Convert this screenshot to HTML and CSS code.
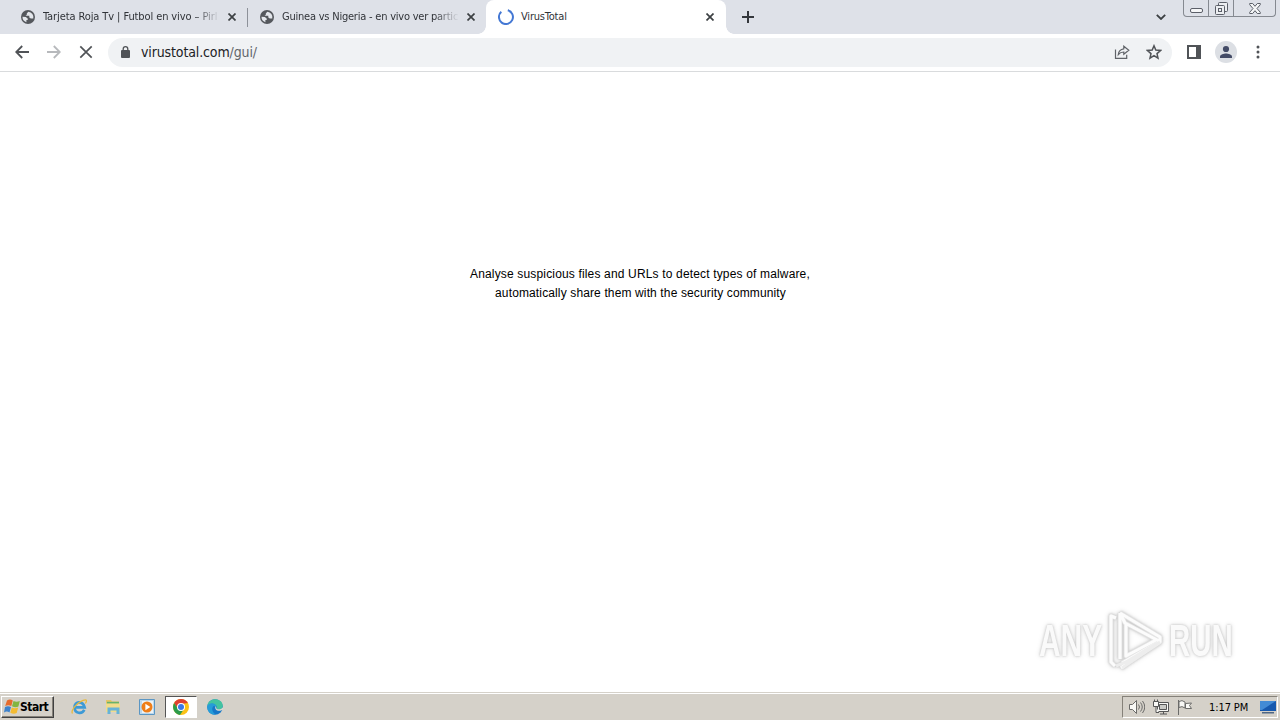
FILE: index.html
```
<!DOCTYPE html>
<html lang="en">
<head>
  <meta charset="UTF-8">
  <title>VirusTotal</title>
  <link rel="stylesheet" href="styles.css">
</head>
<body>

  <svg class="defs">
    <symbol id="globe" viewBox="0 0 14 14">
      <circle cx="7" cy="7" r="7" fill="#55585d"/>
      <path d="M7.3 1.7 5.8 3.4v1.4L4.5 5.8h3.8v1.7l1.5 1.1h2.5A5.6 5.6 0 0 0 7.3 1.7zM1.5 6.8l3.3.1 1.9 1.7v1.3H5.4v2.3A5.5 5.5 0 0 1 1.5 6.8z" fill="#e4e7ec"/>
    </symbol>
    <symbol id="cross" viewBox="0 0 8 8">
      <path d="M.5.5l7 7M7.5.5l-7 7" stroke="#3c4043" stroke-width="1.7"/>
    </symbol>
  </svg>

  <div class="tabstrip">
    <div class="tab">
      <svg class="favicon"><use href="#globe"/></svg>
      <span class="title fade">Tarjeta Roja Tv | Futbol en vivo – Pirl</span>
      <svg class="close"><use href="#cross"/></svg>
    </div>
    <div class="tab second">
      <svg class="favicon"><use href="#globe"/></svg>
      <span class="title fade guinea">Guinea vs Nigeria - en vivo ver partic</span>
      <svg class="close"><use href="#cross"/></svg>
    </div>
    <div class="tab active">
      <svg class="spinner" viewBox="0 0 16 16"><path d="M9.8 1.3A7 7 0 1 1 3.3 2.8" fill="none" stroke="#4478d4" stroke-width="2"/></svg>
      <span class="title virus">VirusTotal</span>
      <svg class="close"><use href="#cross"/></svg>
    </div>
    <svg class="plus" viewBox="0 0 12 12"><path d="M6 0v12M0 6h12" stroke="#34373c" stroke-width="2"/></svg>
    <svg class="chevron" viewBox="0 0 10 6"><path d="M.8.8 5 5 9.2.8" fill="none" stroke="#3c4043" stroke-width="1.8"/></svg>
    <div class="window-buttons">
      <span><svg width="13" height="5"><rect x=".5" y=".5" width="12" height="4" rx="1.5" fill="#f5f6f7" stroke="#5b5f68"/></svg></span>
      <span><svg width="13" height="13" fill="#eceef1" stroke="#5b5f68"><rect x="3.5" y=".5" width="9" height="9" rx="1"/><rect x=".5" y="3.5" width="9" height="9" rx="1"/><rect x="3.5" y="6.5" width="3" height="3"/></svg></span>
      <span><svg width="12" height="11"><path d="M.7.5h3L6 3.3 8.3.5h3v1.2L8 5.5l3.3 3.8v1.2h-3L6 7.7l-2.3 2.8h-3V9.3L4 5.5.7 1.7z" fill="#f5f6f7" stroke="#5b5f68"/></svg></span>
    </div>
  </div>

  <div class="toolbar">
    <svg class="nav" viewBox="0 0 14 14"><path d="M14 7H1.5M7.2 1 1.2 7l6 6" fill="none" stroke="#505357" stroke-width="1.8"/></svg>
    <svg class="nav" viewBox="0 0 14 14"><path d="M0 7h12.5M6.8 1l6 6-6 6" fill="none" stroke="#b7b9bc" stroke-width="1.8"/></svg>
    <svg class="nav" viewBox="0 0 14 14"><path d="M1.3 1.3l11.4 11.4M12.7 1.3 1.3 12.7" stroke="#505357" stroke-width="1.7"/></svg>
    <div class="omnibox">
      <svg class="lock" viewBox="0 0 9 12"><rect y="4" width="9" height="8" rx="1" fill="#505357"/><path d="M2.2 4.5V3a2.3 2.3 0 0 1 4.6 0v1.5" fill="none" stroke="#505357" stroke-width="1.3"/></svg>
      <span class="url">virustotal.com<i>/gui/</i></span>
      <svg class="share" viewBox="0 0 16 14"><path d="M1.5 4.5v8.8h11.2V9.8M4.3 9.5C4.6 6.4 6.5 4.2 9.8 3.8V1.2L14.8 5.3l-5 4V7C7.3 7 5.7 7.8 4.3 9.5z" fill="none" stroke="#606368" stroke-width="1.2"/></svg>
      <svg class="star" viewBox="0 0 16 16"><path d="M8 1.8l1.8 4.3 4.7.4L11 9.6l1 4.6-4-2.5-4 2.5 1-4.6-3.5-3.1 4.7-.4z" fill="none" stroke="#505357" stroke-width="1.5"/></svg>
    </div>
    <svg class="panel" viewBox="0 0 14 14"><path d="M1 1h12v12H1z" fill="#fff" stroke="#505357" stroke-width="2"/><path d="M9 1h4v12H9z" fill="#505357"/></svg>
    <svg class="avatar" viewBox="0 0 22 22"><circle cx="11" cy="11" r="11" fill="#dcdfe4"/><circle cx="11" cy="8" r="3.1" fill="#434b66"/><path d="M5 17v-1.5c0-2.2 4-3.1 6-3.1s6 .9 6 3.1V17z" fill="#434b66"/></svg>
    <svg class="menu" viewBox="0 0 4 14" fill="#505357"><circle cx="2" cy="2" r="1.5"/><circle cx="2" cy="7" r="1.5"/><circle cx="2" cy="12" r="1.5"/></svg>
  </div>

  <div class="page">
    <p class="line-one">Analyse suspicious files and URLs to detect types of malware,</p>
    <p class="line-two">automatically share them with the security community</p>
    <div class="watermark">
      <span>ANY</span>
      <svg viewBox="0 0 56 62">
        <path d="M8 8 3 6v46l4 4M12 3v46M12 3l40 24v5L18 54l-5 4M12 3l5 10 34 18M18 13v33l30-16M14 53l35-20" fill="none" stroke="#e4e4e4" stroke-width="4.5" stroke-linejoin="round"/>
        <path d="M8 8 3 6v46l4 4M12 3v46M12 3l40 24v5L18 54l-5 4M12 3l5 10 34 18M18 13v33l30-16M14 53l35-20" fill="none" stroke="#fcfcfc" stroke-width="3" stroke-linejoin="round"/>
        <path d="M14 58l38-26M8 56l10-4 31-19" fill="none" stroke="#ededed" stroke-width="3"/>
      </svg>
      <span class="run">RUN</span>
    </div>
  </div>

  <div class="taskbar">
    <div class="start">
      <svg viewBox="0 0 16 16"><path d="M3 1.5q3-2 5.8 0L7.3 7Q4.3 5.5 1.2 7z" fill="#e66b2c"/><path d="M9.5 2q3 1.5 6.3 0L14.4 7.6q-3 1.4-6.4-.3z" fill="#82b541"/><path d="M1 8q3-1.6 6 0l-1.5 5.4q-2.7-1.7-5.5 0z" fill="#3d82cc"/><path d="M7.8 8.4q3 1.5 6.4 0l-1.5 5.7q-3 1.4-6.4-.3z" fill="#f3bb32"/></svg>
      <b>Start</b>
    </div>
    <div class="launch">
      <svg viewBox="0 0 16 16"><path d="M13.6 8.4H3.6c-.2-6.3 8.2-6.9 10 0zM3.6 8.5c0 6.1 7.4 7 9.7 2.4" fill="none" stroke="#3d9ad6" stroke-width="2.7"/><path d="M1.5 14.5C-.8 11 8 1.5 14.5.8c1.5.1 1 2-.2 3.7" fill="none" stroke="#e8b93c" stroke-width="1.3"/></svg>
    </div>
    <div class="launch">
      <svg viewBox="0 0 16 16"><path d="M1 1h5l1 1.5h7V12H1z" fill="#e4c667"/><path d="M2 2.8h12v2H2z" fill="#67b36b"/><path d="M1 4.5h14V13H1z" fill="#f1dc8c"/><path d="M2.5 15V8.5h12V15h-3v-3.5h-6V15z" fill="#67b3d7"/></svg>
    </div>
    <div class="launch">
      <svg viewBox="0 0 16 16"><path d="M.5.5h15v15H.5z" fill="#bcd8ed" stroke="#5b96c3"/><path d="M3 2h11v12H3z" fill="#edf3f6"/><circle cx="8" cy="8" r="5.5" fill="#ef7e19"/><path d="M6.4 4.8 11.3 8l-4.9 3.2z" fill="#fff"/></svg>
    </div>
    <div class="launch pressed">
      <svg viewBox="0 0 16 16"><circle cx="8" cy="8" r="8" fill="#fbc116"/><path d="M1.1 4A8 8 0 0 1 14.9 4L8 5 5 9.8z" fill="#df4032"/><path d="M1.1 4A8 8 0 0 0 7 15.9l3.5-5.2L5 9.8z" fill="#2b9b4b"/><circle cx="8" cy="8" r="4" fill="#fff"/><circle cx="8" cy="8" r="3" fill="#3b78e7"/></svg>
    </div>
    <div class="launch">
      <svg viewBox="0 0 16 16"><circle cx="8" cy="8" r="7.8" fill="#1677c8"/><path d="M.5 7C1-2 15.5-1.7 15.8 7c0 4-5 4-6.2 2.7C11 6 5 2 .5 7z" fill="#43c3a0"/><path d="M.3 7.5C1.5 3 8.8 3.5 9.8 7.8L6.5 7C3.7 10 6 14 9 15.6 3 16 0 12 .3 7.5z" fill="#269cd8"/><path d="M8.8 7c-2.2 3 2 6.3 5.8 4.2l1.4-.4V8.3c-1.2 2-4.8 2.6-6.4 1.4z" fill="#ddd9d0"/></svg>
    </div>
    <div class="tray">
      <svg viewBox="0 0 16 16" fill="#f8f8f5" stroke="#6b6b69"><path d="M.5 5.5h3l4-4v13l-4-4h-3z"/><path d="M9.5 5.5q2 2.5 0 5M11.5 3.5q3.5 4.5 0 9M13.5 2q4.5 6 0 12" fill="none"/></svg>
      <svg viewBox="0 0 16 16" fill="#f8f8f5" stroke="#555"><path d="M4.5 3.5h11v9h-11zM7 15h7M10.5 12.5V15"/><path d="M6.5 5.5h7v5h-7z" fill="#c9c9c5"/><path d="M.5 2.5h5v5h-5zM1.5.5v2M4.5.5v2M3 7.5v6h3"/></svg>
      <svg viewBox="0 0 16 16" fill="#f8f8f5" stroke="#6b6b69"><path d="M1.5 1v15M2 2.5q3-2 6 .5v6q-3-2.5-6-.5zM8.5 4.5l6-.5-2 2.5 2 3H8.5z"/></svg>
      <span class="clock">1:17 PM</span>
      <svg class="desktop" viewBox="0 0 16 14"><path d="M0 1h16v10H0z" fill="#1759ae"/><path d="M0 1h16L2 10H0z" fill="#438bd5"/><path d="M2 12h12v1.5H2z" fill="#4e6684"/></svg>
    </div>
  </div>

</body>
</html>
```

FILE: styles.css
```
* {
  box-sizing: border-box;
}

body {
  margin: 0;
  width: 1280px;
  height: 720px;
  display: flex;
  flex-direction: column;
  background: #fff;
  font-family: 'DejaVu Sans Condensed', 'DejaVu Sans', sans-serif;
  overflow: hidden;
}

svg {
  display: block;
  flex: none;
}

.defs {
  position: absolute;
  width: 0;
  height: 0;
}

.tabstrip {
  display: flex;
  align-items: flex-start;
  height: 34px;
  background: #dee1e8;
}

.tab {
  display: flex;
  align-items: center;
  width: 248px;
  height: 34px;
  padding: 0 11px 0 21px;
  border-right: 1px solid transparent;
  border-image: linear-gradient(transparent 25%, #8d9199 25%, #8d9199 79%, transparent 79%) 1;
}

.tab.second {
  width: 238px;
  padding: 0 11px 0 12px;
  border: 0;
}

.tab.active {
  position: relative;
  width: 240px;
  padding: 0 12px;
  border: 0;
  border-radius: 8px 8px 0 0;
  background: #fff;
}

.tab.active::before,
.tab.active::after {
  content: '';
  position: absolute;
  bottom: 0;
  width: 8px;
  height: 8px;
}

.tab.active::before {
  left: -8px;
  background: radial-gradient(circle at 0 0, transparent 7.5px, #fff 8px);
}

.tab.active::after {
  right: -8px;
  background: radial-gradient(circle at 100% 0, transparent 7.5px, #fff 8px);
}

.favicon {
  width: 14px;
  height: 14px;
}

.spinner {
  width: 16px;
  height: 16px;
}

.title {
  width: 177px;
  margin-left: 8px;
  white-space: nowrap;
  color: #303338;
  font-size: 11px;
  letter-spacing: -0.1px;
  line-height: 16px;
}

.fade {
  -webkit-mask-image: linear-gradient(to right, #000 86%, transparent);
  mask-image: linear-gradient(to right, #000 86%, transparent);
}

.guinea {
  letter-spacing: -0.22px;
}

.virus {
  margin-left: 7px;
  letter-spacing: -0.2px;
}

.close {
  width: 8px;
  height: 8px;
  margin-left: auto;
}

.plus {
  width: 12px;
  height: 12px;
  margin: 11px 0 0 16px;
}

.chevron {
  width: 10px;
  height: 6px;
  margin: 14px 17px 0 auto;
}

.window-buttons {
  display: flex;
  width: 93px;
  height: 17px;
  margin-right: 4px;
  border: 1px solid #858990;
  border-top: 0;
  border-radius: 0 0 4px 4px;
}

.window-buttons span {
  display: flex;
  align-items: center;
  justify-content: center;
  width: 25px;
  border-right: 1px solid #858990;
}

.window-buttons span:first-child {
  align-items: flex-end;
  padding-bottom: 3px;
}

.window-buttons span:last-child {
  flex: 1;
  border: 0;
}

.toolbar {
  display: flex;
  align-items: center;
  height: 38px;
  padding: 0 20px 1px 15px;
  border-bottom: 1px solid #d9dbdd;
}

.nav {
  width: 14px;
  height: 14px;
  margin-right: 18px;
}

.omnibox {
  display: flex;
  align-items: center;
  width: 1064px;
  height: 29px;
  margin-left: -3px;
  padding: 0 10px 0 13px;
  border-radius: 15px;
  background: #f0f2f4;
}

.lock {
  width: 9px;
  height: 12px;
}

.url {
  margin-left: 11px;
  color: #202124;
  font-size: 14px;
  letter-spacing: -0.13px;
}

.url i {
  color: #62666b;
  font-style: normal;
}

.share {
  width: 16px;
  height: 14px;
  margin-left: auto;
}

.star {
  width: 16px;
  height: 16px;
  margin-left: 16px;
}

.panel {
  width: 14px;
  height: 14px;
  margin-left: 15px;
}

.avatar {
  width: 22px;
  height: 22px;
  margin-left: 14px;
}

.menu {
  width: 4px;
  height: 14px;
  margin-left: auto;
}

.page {
  position: relative;
  flex: 1;
  padding-top: 193px;
  color: #000;
  font: 12px/19px 'Liberation Sans', Arial, sans-serif;
  letter-spacing: 0.16px;
  text-align: center;
}

.page p {
  margin: 0;
  white-space: nowrap;
}

.page .line-two {
  padding-left: 1px;
  letter-spacing: 0.13px;
}

.watermark {
  position: absolute;
  left: 1039px;
  top: 538px;
  display: flex;
  align-items: center;
  color: #fafafa;
  filter: drop-shadow(0 0 1px #c4c4c4) drop-shadow(0 0 2px #ddd);
}

.watermark span {
  width: 64px;
  font: bold 44px/62px 'Liberation Sans', Arial, sans-serif;
  letter-spacing: 0;
  transform: scaleX(0.68);
  transform-origin: left;
}

.watermark svg {
  width: 56px;
  height: 62px;
  margin: 0 5px 0 5px;
}

.watermark .run {
  transform: scaleX(0.67);
}

.taskbar {
  display: flex;
  align-items: center;
  height: 28px;
  padding: 2px 2px 1px 1px;
  background: #d5d1c9;
  border-top: 1px solid #d5d1c9;
  box-shadow: inset 0 1px #fff;
}

.start {
  display: flex;
  align-items: center;
  width: 53px;
  height: 22px;
  margin-right: 9px;
  padding-left: 2px;
  border: 1px solid;
  border-color: #fff #404040 #404040 #fff;
  box-shadow: inset -1px -1px #858179;
  color: #000;
  font-size: 12px;
}

.start svg {
  width: 16px;
  height: 16px;
}

.start b {
  letter-spacing: -0.5px;
}

.launch {
  display: flex;
  align-items: center;
  justify-content: center;
  width: 32px;
  height: 22px;
  margin-right: 2px;
}

.launch svg {
  width: 16px;
  height: 16px;
}

.pressed {
  background: #fff;
  border: 1px solid;
  border-color: #555 #fff #fff #555;
}

.tray {
  display: flex;
  align-items: center;
  width: 156px;
  height: 22px;
  margin-left: auto;
  padding: 0 1px 0 6px;
  border: 1px solid;
  border-color: #858179 #fff #fff #858179;
}

.tray svg {
  width: 16px;
  height: 16px;
  margin-right: 8px;
}

.clock {
  margin-left: 8px;
  color: #000;
  font-size: 11px;
  letter-spacing: -0.1px;
  white-space: nowrap;
}

.tray .desktop {
  height: 14px;
  margin: 0 0 0 auto;
}
```
